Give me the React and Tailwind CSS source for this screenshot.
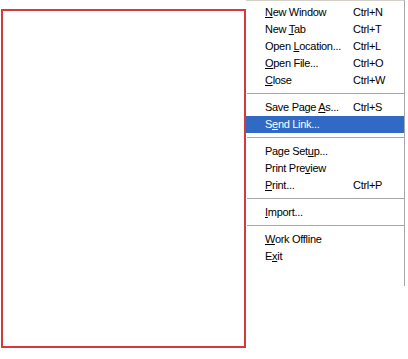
import React from 'react';

// menu entries: label parts [before, accessKey, after], shortcut
const groups = [
  [
    { pre: '', key: 'N', post: 'ew Window', sc: 'Ctrl+N' },
    { pre: 'New ', key: 'T', post: 'ab', sc: 'Ctrl+T' },
    { pre: 'Open ', key: 'L', post: 'ocation...', sc: 'Ctrl+L' },
    { pre: '', key: 'O', post: 'pen File...', sc: 'Ctrl+O' },
    { pre: '', key: 'C', post: 'lose', sc: 'Ctrl+W' },
  ],
  [
    { pre: 'Save Page ', key: 'A', post: 's...', sc: 'Ctrl+S' },
    { pre: 'S', key: 'e', post: 'nd Link...', sc: '', active: true },
  ],
  [
    { pre: 'Page Set', key: 'u', post: 'p...', sc: '' },
    { pre: 'Print Pre', key: 'v', post: 'iew', sc: '' },
    { pre: '', key: 'P', post: 'rint...', sc: 'Ctrl+P' },
  ],
  [{ pre: '', key: 'I', post: 'mport...', sc: '' }],
  [
    { pre: '', key: 'W', post: 'ork Offline', sc: '' },
    { pre: 'E', key: 'x', post: 'it', sc: '' },
  ],
];

function MenuItem({ item }) {
  return (
    <div
      className={
        'flex items-center h-[17px] pl-[19px] ' +
        (item.active ? 'bg-[#316ac5] text-white' : 'text-black')
      }
    >
      <span className="w-[88px] whitespace-nowrap">
        {item.pre}
        <u className="underline-offset-[1px]">{item.key}</u>
        {item.post}
      </span>
      <span className="whitespace-nowrap">{item.sc}</span>
    </div>
  );
}

function Separator() {
  return (
    <div className="h-[10px] pt-[4px] pl-[1px]">
      <div className="h-[1px] bg-[#a7a6aa]" />
      <div className="h-[1px] bg-white" />
    </div>
  );
}

export default function App() {
  return (
    <div
      className="relative w-[408px] h-[359px] bg-white overflow-hidden"
      style={{ fontFamily: '"Liberation Sans", Arial, sans-serif' }}
    >
      {/* page content box */}
      <div className="ml-[1px] mt-[9px] w-[245px] h-[339px] border-2 border-[#d43a3a]" />

      {/* file menu */}
      <div className="absolute left-[246px] top-0 w-[159px] h-[286px] bg-white border-t border-[#d4d0c8] border-r border-r-[#a7a6aa] pt-[3px] text-[11px] tracking-[-0.3px] leading-[17px]">
        {groups.map((g, gi) => (
          <div key={gi}>
            {gi > 0 && <Separator />}
            {g.map((item, i) => (
              <MenuItem key={i} item={item} />
            ))}
          </div>
        ))}
      </div>
    </div>
  );
}
